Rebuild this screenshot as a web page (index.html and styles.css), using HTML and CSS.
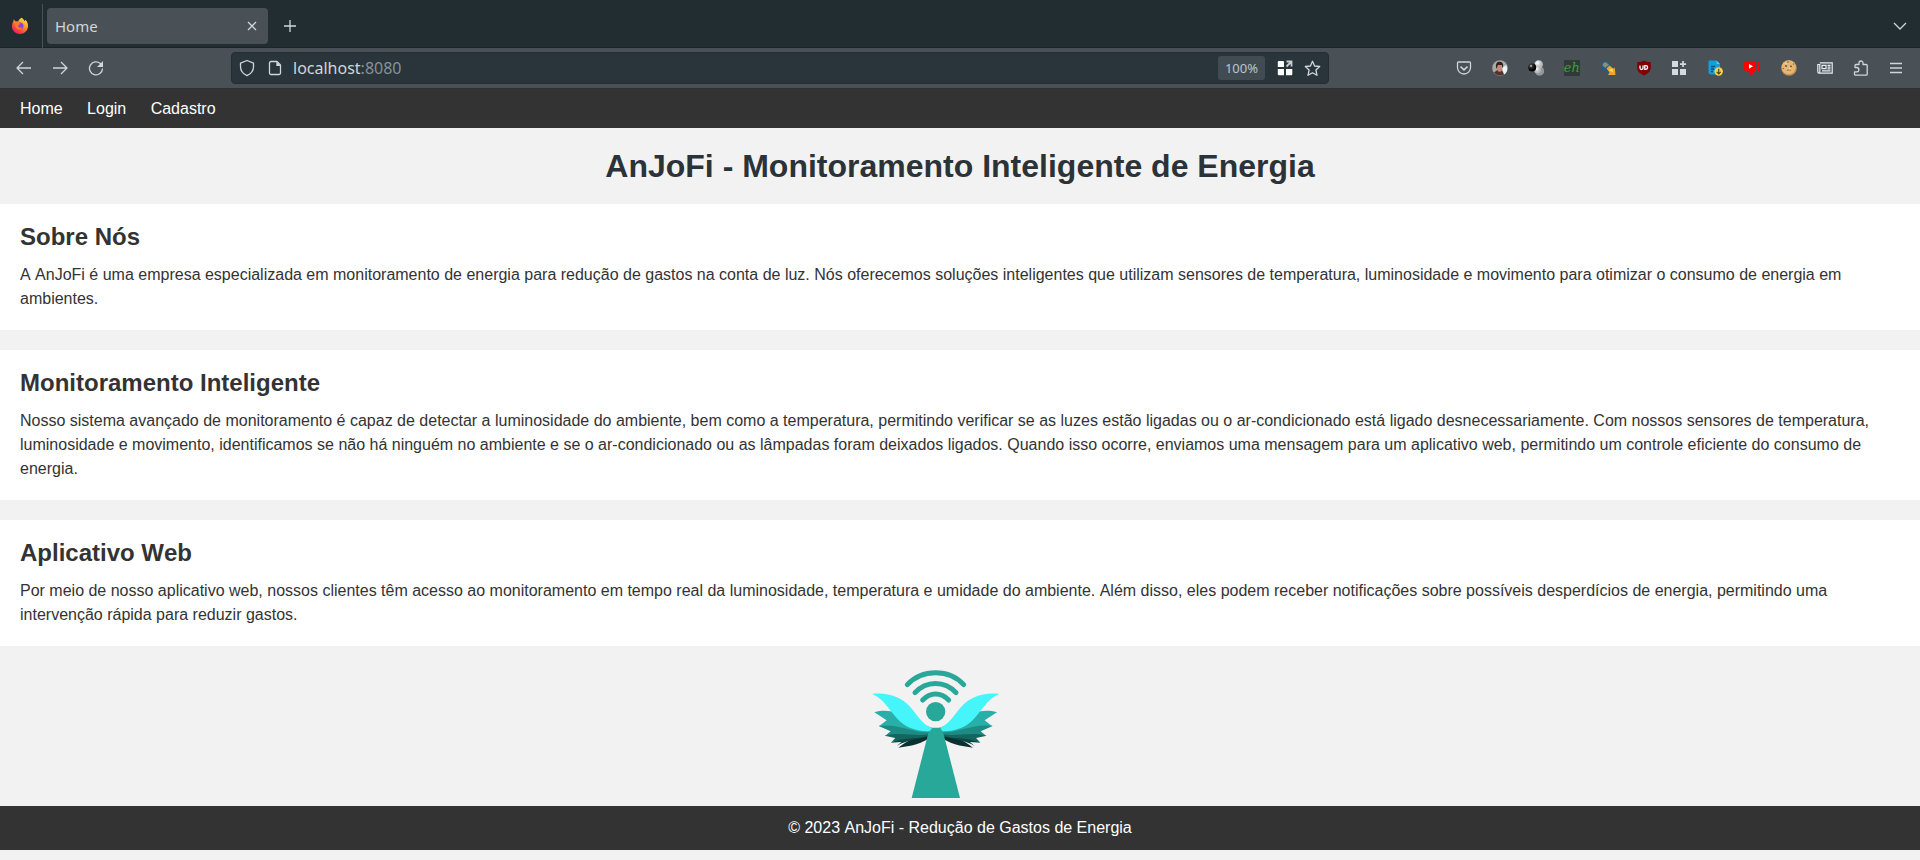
FILE: index.html
```html
<!DOCTYPE html>
<html lang="pt-BR">
<head>
<meta charset="utf-8">
<title>Home</title>
<link rel="stylesheet" href="styles.css">
</head>
<body>
<div class="tabbar">
  <div class="brand">
    <svg width="18" height="18" viewBox="0 0 18 18">
      <defs>
        <linearGradient id="fox" x1="0.85" y1="0" x2="0.2" y2="1"><stop offset="0" stop-color="#fff24a"/><stop offset=".4" stop-color="#ff9a22"/><stop offset=".75" stop-color="#ff4040"/><stop offset="1" stop-color="#e81a70"/></linearGradient>
      </defs>
      <path fill="url(#fox)" d="M10.4.8c2 1 2.700 2.200 3 3.500.6-.4.9-1 .9-1.600 1.800 1.500 2.900 4 2.700 6.700-.3 4.200-3.700 7.500-8 7.500S1 13.600 1 9.400c0-2.100.5-3.500 1.400-4.900l.3-2.200 1.700 2 2.800.2C7.800 2.700 9 1.600 10.400.8z"/>
      <circle cx="9" cy="9" r="3.500" fill="#8b45cf"/>
      <path fill="#ff7a25" d="M3.500 5.200c2-.5 3.200 0 4.100.9l1.900.4c-.4 1-1.500 1.200-2 1.700-.6.600-.5 1.800.6 2.300 1.200.600 2.400-.1 3.500.2-1.100 1.900-3.400 2.300-5.200 1.200C4.400 10.600 4.400 7.500 3.500 5.200z"/>
    </svg>
  </div>
  <div class="tab"><span>Home</span>
    <svg class="line" width="10" height="10" viewBox="0 0 10 10"><path d="M1 1l8 8M9 1L1 9"/></svg>
  </div>
  <svg class="line plus" width="14" height="14" viewBox="0 0 14 14"><path d="M7 1v12M1 7h12"/></svg>
  <svg class="line chevron" width="14" height="8" viewBox="0 0 14 8"><path d="M1 1l6 6 6-6"/></svg>
</div>
<div class="toolbar">
  <div class="nav-buttons">
    <svg class="line" width="16" height="16" viewBox="0 0 16 16"><path d="M15 8H1.500M7 2L1 8l6 6"/></svg>
    <svg class="line" width="16" height="16" viewBox="0 0 16 16"><path d="M1 8h13.500M9 2l6 6-6 6"/></svg>
    <svg class="line" width="16" height="16" viewBox="0 0 16 16"><path d="M14.500 8.500A6.500 6.500 0 1 1 12.300 3.500L14 5"/><path class="solid" d="M15 1v6H9z"/></svg>
  </div>
  <div class="urlbar">
    <svg class="line" width="16" height="18" viewBox="0 0 16 18"><path d="M8 1.500l6.500 2.700v3.600c0 4-2.500 7-6.500 8.900-4-1.900-6.500-4.900-6.500-8.900V4.200z"/></svg>
    <svg class="line page-icon" width="14" height="16" viewBox="0 0 14 16"><path d="M3 1.500h6L12.500 5v8a1.500 1.500 0 0 1-1.500 1.500H3A1.500 1.500 0 0 1 1.500 13V3A1.500 1.500 0 0 1 3 1.500z"/><path class="solid" d="M8.300 1.500V6h4.500z"/></svg>
    <div class="address">localhost<span>:8080</span></div>
    <div class="zoom">100%</div>
    <svg class="grid-icon" width="16" height="16" viewBox="0 0 16 16"><path fill="#fff" d="M1.500 1h4.800l.7.700V7H.800V1.700zM.800 9H7v6.300H1.500l-.7-.7zM9 9h6.300v5.600l-.7.700H9z"/><path d="M9.500 1.500h5v5M14 2L9.500 6.500" fill="none" stroke="#c4ced3" stroke-width="1.800"/></svg>
    <svg class="line" width="17" height="17" viewBox="0 0 17 17"><path d="M8.500 1.300l2.100 4.700 5.100.5-3.800 3.500 1.100 5.300-4.500-2.600L4 15.300 5.100 10 1.300 6.500l5.100-.5z"/></svg>
  </div>
  <div class="extensions">
    <svg class="line" width="16" height="16" viewBox="0 0 16 16"><path d="M2.500 2h11c.6 0 1 .4 1 1v4.500a6.500 6.500 0 0 1-13 0V3c0-.6.4-1 1-1z"/><path d="M4.500 6.500L8 9.800l3.500-3.300" stroke-width="1.600"/></svg>
    <svg width="16" height="16" viewBox="0 0 16 16"><circle cx="8" cy="8" r="7.800" fill="#aaa8a6"/><path fill="#eef3f6" d="M10 8l4-3c2 3 1.500 7-2 9.500z"/><path fill="#57312b" d="M2 12.500l4-3 4 1 2 4c-3 1.500-7.500 1.500-10-2z"/><ellipse cx="7.600" cy="7.500" rx="2.600" ry="4.300" fill="#c98977"/><path fill="#30231f" d="M4.300 9C3 3 5.500 1.500 8 1.800c2.800.3 3.800 2.500 2.900 6.700L9.800 5H6z"/></svg>
    <svg width="16" height="16" viewBox="0 0 16 16"><defs><radialGradient id="white-ball" cx=".35" cy=".3"><stop offset="0" stop-color="#fff"/><stop offset="1" stop-color="#b6b8b9"/></radialGradient><radialGradient id="dark-ball" cx=".35" cy=".3"><stop offset="0" stop-color="#ddd"/><stop offset=".4" stop-color="#333"/><stop offset="1" stop-color="#050505"/></radialGradient></defs><circle cx="11.500" cy="11" r="4.700" fill="#92979a"/><circle cx="10.700" cy="4.500" r="4.200" fill="url(#white-ball)"/><circle cx="9.500" cy="10" r="3.300" fill="url(#white-ball)"/><circle cx="4.200" cy="7.500" r="4" fill="url(#dark-ball)"/></svg>
    <div class="eh">eh</div>
    <svg width="16" height="16" viewBox="0 0 16 16"><path fill="#235b86" d="M1 3l4-2.500 10 8V15H9L2 9z"/><path fill="#839174" d="M3 3.500L5.500 2 9 4.800 5.200 8 2.500 5.500z"/><path fill="#f0a42c" d="M6.500 8.500L9.500 5.500l3.700 3 1.500-1L15.500 15H8l1.500-2.500z"/><path fill="#ffe06a" d="M9 10l3-1.500 1.500 4z"/></svg>
    <svg width="16" height="16" viewBox="0 0 16 16"><path fill="#800008" d="M8 .5C10 1.700 12 2.200 14.800 2.200v5.300c0 3.700-2.500 6-6.800 8-4.300-2-6.800-4.300-6.800-8V2.200C4 2.200 6 1.700 8 .5z"/><path d="M4 5.500V8c0 2 3 2 3 0V5.500M8.800 5.700v3.600h1a1.800 1.800 0 0 0 0-3.600z" fill="none" stroke="#fff" stroke-width="1.300"/></svg>
    <svg width="16" height="16" viewBox="0 0 16 16"><path fill="#d5dade" d="M1 1h6v6H1zM1 9h6v6H1zM9 9h6v6H9zM11.200 1h1.700v2.200h2.200v1.700h-2.200v2.200h-1.700V4.900H9V3.200h2.200z"/></svg>
    <svg width="16" height="16" viewBox="0 0 16 16"><path fill="#149cdb" d="M2 .5h7.500L13 4v10.500H3.500L1.500 13V1z"/><path fill="#58c6f4" d="M9.500.5V4H13z"/><path d="M4 6.500h4M4 9h3M4 11.500h2" stroke="#084f79" stroke-width="1.300"/><circle cx="11.700" cy="11.500" r="4.200" fill="#f8d443"/><path d="M11.700 8.800v5M9.700 11.800l2 2 2-2" fill="none" stroke="#4d461c" stroke-width="1.200"/></svg>
    <svg width="18" height="16" viewBox="0 0 18 16"><path fill="#f00" d="M1 2.500L6 1h7v9.500l-2.800 1.500-1 3.500c-2.200.3-3-1-2.500-3.500L1.500 10.500C.3 8 .3 5 1 2.500zM14 1.500h3V11h-3z"/><path fill="#fff" d="M6 4l4 2.300-4 2.400z"/></svg>
    <svg width="16" height="16" viewBox="0 0 16 16"><circle cx="8" cy="8" r="7.800" fill="#c58f4c"/><circle cx="7.700" cy="7.300" r="7" fill="#e3b777"/><g fill="#6c4328"><circle cx="5" cy="6" r=".9"/><circle cx="10" cy="6.300" r=".9"/><circle cx="7" cy="2" r=".7"/><circle cx="12.500" cy="4" r=".6"/><circle cx="2.300" cy="8.500" r=".6"/></g><path d="M6 10.500q2-1.500 4 0" fill="none" stroke="#986339" stroke-width=".8"/><path fill="#f4d7a4" d="M3.500 3h3l-2 1.500zM8 7l2 2-2 .5z"/></svg>
    <svg width="16" height="12" viewBox="0 0 16 12"><path d="M2.800.8h12.400v10.400H2q-1.200 0-1.200-1.400V2.500h2v7.300q0 1.400-.8 1.400M5 3.300h4v3.400H5zM10.500 3.300h3M10.500 5.100h3M10.500 6.900h3M5 8.800h8.500" fill="none" stroke="#e9edef" stroke-width="1.200"/></svg>
    <svg class="line" width="16" height="16" viewBox="0 0 16 16"><path d="M2.500 15.200h10.700a1 1 0 0 0 1-1V5.500a1 1 0 0 0-1-1H10V3a2 2 0 0 0-4 0v1.500H3a1 1 0 0 0-1 1v2h1.700a2 2 0 0 1 0 4.300H1.500v2.400a1 1 0 0 0 1 1z"/></svg>
    <svg class="line" width="14" height="16" viewBox="0 0 14 16"><path d="M1 3.500h12M1 8h12M1 12.500h12"/></svg>
  </div>
</div>
<nav class="menu"><a>Home</a><a>Login</a><a>Cadastro</a></nav>
<header class="hero"><h1>AnJoFi - Monitoramento Inteligente de Energia</h1></header>
<main class="sections">
  <section class="block"><h2>Sobre Nós</h2>
    <p>A AnJoFi é uma empresa especializada em monitoramento de energia para redução de gastos na conta de luz. Nós oferecemos soluções inteligentes que utilizam sensores de temperatura, luminosidade e movimento para otimizar o consumo de energia em ambientes.</p></section>
  <section class="block"><h2>Monitoramento Inteligente</h2>
    <p>Nosso sistema avançado de monitoramento é capaz de detectar a luminosidade do ambiente, bem como a temperatura, permitindo verificar se as luzes estão ligadas ou o ar-condicionado está ligado desnecessariamente. Com nossos sensores de temperatura, luminosidade e movimento, identificamos se não há ninguém no ambiente e se o ar-condicionado ou as lâmpadas foram deixados ligados. Quando isso ocorre, enviamos uma mensagem para um aplicativo web, permitindo um controle eficiente do consumo de energia.</p></section>
  <section class="block"><h2>Aplicativo Web</h2>
    <p>Por meio de nosso aplicativo web, nossos clientes têm acesso ao monitoramento em tempo real da luminosidade, temperatura e umidade do ambiente. Além disso, eles podem receber notificações sobre possíveis desperdícios de energia, permitindo uma intervenção rápida para reduzir gastos.</p></section>
</main>
<div class="logo">
  <svg width="150" height="146" viewBox="0 0 450 438">
    <defs><g id="wing">
      <path fill="#0b302f" d="M214 224C180 222 145 240 115 263C150 260 190 250 216 229z"/>
      <path fill="#0c4744" d="M214 218C170 225 125 231 92 248L124 246L110 258C140 240 185 236 216 226z"/>
      <path fill="#14655f" d="M214 210C170 215 115 210 74 227L106 234L94 247C135 230 180 239 216 224z"/>
      <path fill="#1d8b84" d="M216 208C160 200 110 180 56 198L92 214L76 227C125 213 170 233 218 220z"/>
      <path fill="#28afa9" d="M218 204C155 185 110 138 43 157L80 181L58 198C115 188 165 224 219 215z"/>
      <path fill="#45f5f9" d="M36 102C85 96 123 112 148 138C174 166 186 194 216 204L216 213C172 216 134 202 112 176C84 146 72 117 36 102z"/>
    </g></defs>
    <use href="#wing"/><use href="#wing" transform="translate(454 0) scale(-1 1)"/>
    <g fill="none" stroke="#28a899" stroke-width="15" stroke-linecap="round"><path d="M142 74C186 26 268 26 311 74"/><path d="M165 98C199 61 254 61 288 98"/><path d="M188 120C211 96 243 96 266 120"/></g>
    <circle cx="227" cy="155" r="29" fill="#28a899"/>
    <path fill="#28a899" d="M217 203h24l9 16 50 195H155l50-195z"/>
  </svg>
</div>
<footer class="footer">© 2023 AnJoFi - Redução de Gastos de Energia</footer>
</body>
</html>
```
FILE: styles.css
```css
* { box-sizing: border-box; }
body { margin: 0; background: #f2f2f2; color: #333; font: 16px/24px "Liberation Sans", Arial, sans-serif; font-kerning: none; }
svg { display: block; flex: none; }
h1, h2, p { margin: 0; }
.line { fill: none; stroke: #d0d6d9; stroke-width: 1.3; stroke-linejoin: round; }
.solid { fill: #d0d6d9; stroke: none; }
.tabbar { height: 48px; display: flex; align-items: center; background: #222d32; border-bottom: 1px solid #1b2529; padding-right: 13px; font-family: "Noto Sans", sans-serif; }
.brand { width: 43px; height: 44px; margin-top: 4px; padding: 0 0 0 11px; display: flex; align-items: center; border-right: 1px solid #475157; }
.tab { width: 221px; height: 36px; margin: 5px 0 0 4px; padding: 0 11px 0 8px; display: flex; align-items: center; justify-content: space-between; background: #495157; border-radius: 4px; color: #d0d6d9; font-size: 15px; }
.plus { margin: 5px 0 0 15px; }
.chevron { margin: 4px 0 0 auto; }
.toolbar { height: 40px; padding: 0 17px 0 16px; display: flex; align-items: center; background: #495157; }
.nav-buttons { width: 215px; display: flex; gap: 20px; }
.urlbar { width: 1098px; height: 32px; padding: 0 7px; display: flex; align-items: center; background: #29353b; border: 1px solid #232d32; border-radius: 4px; color: #d0d6d9; font: 16px/24px "Noto Sans", sans-serif; }
.page-icon { margin-left: 13px; }
.address { flex: 1; padding-left: 11px; }
.address span { color: #879196; }
.zoom { width: 47px; height: 24px; background: #414c52; border-radius: 3px; font-size: 13px; text-align: center; color: #bcc5ca; }
.grid-icon { margin: 0 11px 0 12px; }
.extensions { flex: 1; margin-left: 127px; display: flex; align-items: center; justify-content: space-between; }
.eh { width: 16px; height: 16px; background: #303b38; color: #36a13b; font: italic 13px/15px "DejaVu Serif", serif; text-align: center; }
.menu { height: 40px; padding: 1px 20px 0; display: flex; align-items: center; gap: 24.4px; background: #333; border-top: 1px solid #2c3032; color: #fff; }
.hero { padding: 20px; text-align: center; }
.hero h1 { font-size: 32px; line-height: 36px; color: #2b3338; }
.sections { display: flex; flex-direction: column; gap: 20px; }
.block { padding: 20px 20px 19px; background: #fff; }
.block h2 { margin-bottom: 13px; font-size: 24px; line-height: 26px; }
.logo { height: 160px; padding: 14px 50px 0 0; display: flex; justify-content: center; }
.footer { padding: 10px; background: #333; color: #fff; text-align: center; }
```
